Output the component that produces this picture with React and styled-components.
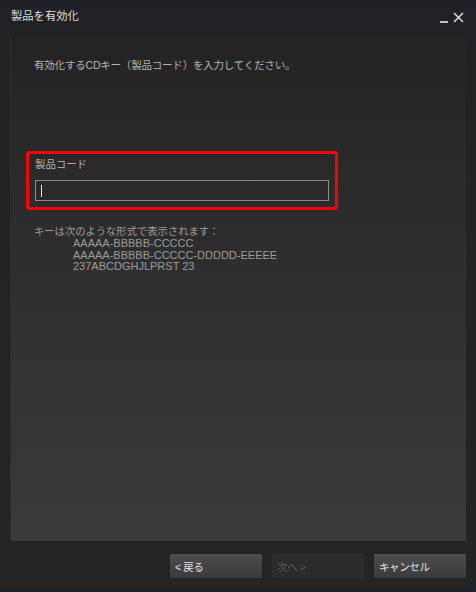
import React from 'react'
import styled, {createGlobalStyle} from 'styled-components'

const GlobalStyle = createGlobalStyle`
  html, body {
    margin: 0;
    padding: 0;
    background: #232323;
  }
  body {
    font-family: "Liberation Sans", Arial, "Noto Sans CJK JP", sans-serif;
  }
`

const formats = [
  'AAAAA-BBBBB-CCCCC',
  'AAAAA-BBBBB-CCCCC-DDDDD-EEEEE',
  '237ABCDGHJLPRST 23'
]

export default function App() {
  return (
    <>
      <GlobalStyle />
      <Window>
        <TitleBar>
          <Title>製品を有効化</Title>
          <Controls>
            <Minimize />
            <CloseIcon width="11" height="11" viewBox="0 0 11 11">
              <path d="M1 1 L10 10 M10 1 L1 10" stroke="#d8d8d8" strokeWidth="1.6" />
            </CloseIcon>
          </Controls>
        </TitleBar>

        <Panel>
          <Instruction>有効化するCDキー（製品コード）を入力してください。</Instruction>

          <Highlight>
            <FieldLabel>製品コード</FieldLabel>
            <CodeInput>
              <Caret />
            </CodeInput>
          </Highlight>

          <FormatHint>キーは次のような形式で表示されます：</FormatHint>
          <FormatList>
            {formats.map(f => (
              <FormatLine key={f}>{f}</FormatLine>
            ))}
          </FormatList>
        </Panel>

        <Footer>
          <Button>&lt; 戻る</Button>
          <Button disabled>次へ &gt;</Button>
          <Button>キャンセル</Button>
        </Footer>
      </Window>
    </>
  )
}

const Window = styled.div`
  width: 476px;
  height: 592px;
  box-sizing: border-box;
  display: flex;
  flex-direction: column;
  background: linear-gradient(to bottom, #1f2127 0px, #232323 60px, #242424 100%);
  border-bottom: 2px solid #1b2530;
  border-right: 2px solid #1e232a;
  overflow: hidden;
`

const TitleBar = styled.div`
  height: 35px;
  flex: none;
  display: flex;
  align-items: flex-start;
  justify-content: space-between;
  padding: 8px 10px 0 11px;
  box-sizing: border-box;
`

const Title = styled.div`
  color: #dcdedf;
  font-size: 11.3px;
  line-height: 16px;
`

const Controls = styled.div`
  display: flex;
  align-items: flex-end;
  gap: 5px;
  padding-top: 4px;
`

const Minimize = styled.div`
  width: 8px;
  height: 2px;
  background: #bdbdbd;
`

const CloseIcon = styled.svg`
  display: block;
`

const Panel = styled.div`
  flex: 1;
  margin: 0 8px 0 10px;
  padding: 23px 0 0 0;
  background: linear-gradient(to bottom, #232323 0%, #2c2c2c 35%, #3a3a3a 100%);
  border-left: 1px solid #2e2e2e;
`

const Instruction = styled.div`
  color: #b4b4b4;
  font-size: 10.5px;
  letter-spacing: -0.2px;
  line-height: 14px;
  padding-left: 23px;
`

const Highlight = styled.div`
  width: 312px;
  height: 59px;
  box-sizing: border-box;
  margin: 79px 0 0 15px;
  border: 3px solid #ff0000;
  border-radius: 3px;
  padding: 4px 6px 0 6px;
`

const FieldLabel = styled.div`
  color: #b4b4b4;
  font-size: 10.4px;
  line-height: 14px;
`

const CodeInput = styled.div`
  margin-top: 8px;
  width: 294px;
  height: 21px;
  box-sizing: border-box;
  border: 1px solid #8a8a8a;
  background: #2a2a2a;
  display: flex;
  align-items: center;
  padding-left: 5px;
`

const Caret = styled.div`
  width: 1px;
  height: 12px;
  background: #e0e0e0;
`

const FormatHint = styled.div`
  color: #9c9c9c;
  font-size: 10.3px;
  line-height: 12px;
  margin: 16px 0 0 23px;
`

const FormatList = styled.div`
  padding-left: 62px;
  margin-top: 0;
`

const FormatLine = styled.div`
  color: #9c9c9c;
  font-size: 11px;
  line-height: 11.5px;
`

const Footer = styled.div`
  height: 49px;
  flex: none;
  display: flex;
  justify-content: flex-end;
  align-items: flex-start;
  gap: 10px;
  padding: 13px 8px 0 0;
  box-sizing: border-box;
`

const Button = styled.button`
  width: 92px;
  height: 24px;
  border: none;
  border-radius: 1px;
  padding: 0 0 0 5px;
  text-align: left;
  font-family: "Liberation Sans", Arial, "Noto Sans CJK JP", sans-serif;
  font-size: 10.5px;
  letter-spacing: -0.4px;
  color: ${p => (p.disabled ? '#5c5c5c' : '#e4e4e4')};
  background: ${p =>
    p.disabled
      ? '#2c2c2c'
      : 'linear-gradient(to bottom, #4e4e4e 0%, #444 50%, #3a3a3a 100%)'};
`
